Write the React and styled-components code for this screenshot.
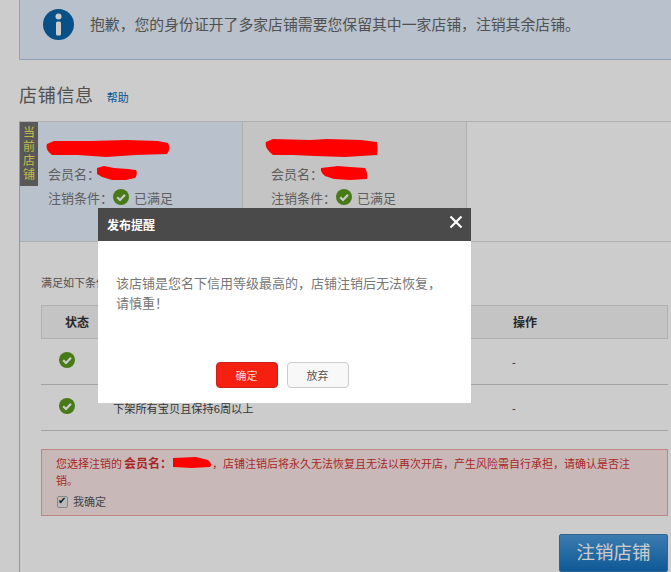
import React from 'react';
import styled, { createGlobalStyle } from 'styled-components';

const GlobalStyle = createGlobalStyle`
    html, body {
        margin: 0;
        padding: 0;
        background: #fff;
        overflow: hidden;
    }
    * {
        box-sizing: border-box;
    }
    body {
        font-family: "Liberation Sans", "Noto Sans CJK SC", sans-serif;
        color: #555;
    }
`

const Page = styled.div`
    width: 671px;
    height: 572px;
    padding-left: 19px;
    overflow: hidden;
`

const Notice = styled.div`
    height: 60px;
    width: 652px;
    background-color: #e6f2ff;
    border: 1px solid #b4cbe2;
    border-top: 0;
    border-right: 0;
    display: flex;
    align-items: flex-start;
    padding: 9px 0 0 23px;
    gap: 16px;
`

const NoticeText = styled.p`
    margin: 7px 0 0 0;
    font-size: 14.85px;
    line-height: 18px;
    color: #666;
`

const TitleRow = styled.div`
    height: 61px;
    display: flex;
    align-items: center;
    padding-top: 7px;
    gap: 13px;
`

const Title = styled.h2`
    margin: 0;
    font-size: 18px;
    font-weight: normal;
    letter-spacing: 0.7px;
    color: #666;
`

const HelpLink = styled.a`
    font-size: 11px;
    color: #0b66b3;
    margin-top: 5px;
`

const Panel = styled.div`
    border-left: 1px solid #bbb;
    border-top: 1px solid #ddd;
    height: 451px;
`

const Stores = styled.div`
    display: flex;
    height: 120px;
    border-bottom: 1px solid #ddd;
`

const StoreCard = styled.div`
    position: relative;
    width: ${p => p.$current ? '223px' : '224px'};
    background-color: ${p => p.$current ? '#e6f2ff' : '#f6f6f6'};
    border-right: 1px solid #ddd;
    padding: 13px 0 0 28px;
`

const CurrentTag = styled.div`
    position: absolute;
    left: 0;
    top: 0;
    width: 18px;
    height: 64px;
    background-color: #6e6e6e;
    color: #f5e65a;
    font-size: 12px;
    line-height: 14px;
    text-align: center;
    padding-top: 4px;
`

const StoreName = styled.div`
    height: 26px;
    display: flex;
    align-items: center;
    margin-left: ${p => p.$offset}px;
`

const InfoRow = styled.div`
    display: flex;
    align-items: center;
    height: 24px;
    font-size: 13px;
    color: #777;
`

const Satisfied = styled.span`
    margin-left: 5px;
`

const Conditions = styled.div`
    padding: 33px 0 0 21px;
`

const ConditionsLabel = styled.div`
    font-size: 11px;
    line-height: 16px;
    color: #666;
    height: 30px;
`

const Table = styled.div`
    width: 627px;
`

const TableHead = styled.div`
    display: grid;
    grid-template-columns: 471px 1fr;
    height: 34px;
    align-items: center;
    background-color: #f5f5f5;
    border: 1px solid #ddd;
    font-size: 12px;
    font-weight: bold;
    color: #333;
    padding-bottom: 2px;
`

const TableRow = styled.div`
    display: grid;
    grid-template-columns: 72px 399px 1fr;
    height: 46px;
    align-items: center;
    border-bottom: 1px solid #ccc;
    font-size: 11.2px;
    color: #444;
`

const StatusCell = styled.div`
    display: flex;
    justify-content: center;
    padding: 0 20px 3px 0;
`

const HeadLabel = styled.span`
    padding-left: 23px;
`

const HeadAction = styled.span`
    padding-left: 0;
`

const Alert = styled.div`
    width: 627px;
    height: 67px;
    margin-top: 18px;
    background-color: #fbe7e7;
    border: 1px solid #f2a6a6;
    padding: 6px 28px 0 14px;
    font-size: 11px;
    line-height: 17px;
    color: #d43030;
`

const AlertStrong = styled.b`
    font-weight: bold;
    font-size: 12px;
    margin: 0 0 0 2px;
`

const ConfirmRow = styled.label`
    display: flex;
    align-items: center;
    gap: 5px;
    height: 20px;
    margin-top: 2px;
    font-size: 11px;
    color: #555;
`

const Check = styled.input`
    appearance: none;
    position: relative;
    margin: 0 0 0 1px;
    width: 11px;
    height: 12px;
    border: 1px solid #aaa;
    border-radius: 2px;
    background-color: #e8e8e8;

    &:checked::after {
        content: "✔";
        position: absolute;
        left: 0;
        top: -2px;
        font-size: 10px;
        line-height: 12px;
        color: #222;
    }
`

const Footer = styled.div`
    width: 627px;
    display: flex;
    justify-content: flex-end;
    margin-top: 18px;
`

const CloseStoreButton = styled.button`
    width: 109px;
    height: 38px;
    border: 1px solid #3a7db5;
    border-radius: 2px;
    background: linear-gradient(#4b9bdc, #1270bd);
    color: #fff;
    font-family: inherit;
    font-size: 18.5px;
    padding: 0 0 5px;
`

const Overlay = styled.div`
    position: fixed;
    inset: 0;
    z-index: 1;
    background-color: rgba(0, 0, 0, 0.2);
`

const Modal = styled.div`
    position: absolute;
    left: 98px;
    top: 208px;
    width: 373px;
    height: 195px;
    background-color: #fff;
    display: flex;
    flex-direction: column;
`

const ModalHeader = styled.div`
    height: 33px;
    background-color: #4a4a4a;
    display: flex;
    align-items: center;
    justify-content: space-between;
    padding: 0 8px 0 9px;
    color: #fff;
    font-size: 12px;
    font-weight: bold;
`

const CloseIcon = styled.svg`
    width: 14px;
    height: 14px;
    margin-top: -5px;
`

const ModalBody = styled.p`
    margin: 0;
    padding: 33px 18px 0 18px;
    font-size: 13px;
    line-height: 20px;
    color: #777;
    height: 121px;
`

const ModalActions = styled.div`
    display: flex;
    justify-content: center;
    gap: 9px;
    padding-right: 5px;
`

const ModalButton = styled.button`
    width: 62px;
    height: 26px;
    border-radius: 4px;
    font-family: inherit;
    font-size: 11px;
    padding: 0;
    border: 1px solid ${p => p.$primary ? '#c9201a' : '#ccc'};
    background-color: ${p => p.$primary ? '#f5200f' : '#f8f8f8'};
    color: ${p => p.$primary ? '#ffd9d0' : '#555'};
`

// the red marker strokes sit on top of the dimming layer
const ScribbleSvg = styled.svg`
    position: relative;
    z-index: 2;
    flex: none;
    vertical-align: ${p => p.$align || 'baseline'};
    margin-left: ${p => p.$offset || 0}px;
`

const InfoIcon = () => (
    <svg width="31" height="31" viewBox="0 0 31 31" style={{ flex: 'none' }}>
        <circle cx="15.5" cy="15.5" r="15.5" fill="#0b66a8" />
        <circle cx="15.5" cy="7.5" r="3" fill="#fff" />
        <rect x="13" y="12.5" width="5" height="14" rx="1.5" fill="#fff" />
    </svg>
)

const CheckIcon = ({ size = 16 }) => (
    <svg width={size} height={size} viewBox="0 0 16 16" style={{ flex: 'none' }}>
        <circle cx="8" cy="8" r="8" fill="#5a9a1e" />
        <path d="M4.2 8.3 L7 11 L12 5.8" fill="none" stroke="#fff" strokeWidth="2.2" />
    </svg>
)

const Scribble = ({ width, height, d, offset, align }) => (
    <ScribbleSvg width={width} height={height} viewBox={`0 0 ${width} ${height}`} $offset={offset} $align={align}>
        <path d={d} fill="#ff0000" />
    </ScribbleSvg>
)

const App = () => {
    return (
        <>
            <GlobalStyle />
            <Page>
                <Notice>
                    <InfoIcon />
                    <NoticeText>抱歉，您的身份证开了多家店铺需要您保留其中一家店铺，注销其余店铺。</NoticeText>
                </Notice>
                <TitleRow>
                    <Title>店铺信息</Title>
                    <HelpLink>帮助</HelpLink>
                </TitleRow>
                <Panel>
                    <Stores>
                        <StoreCard $current>
                            <CurrentTag>当<br />前<br />店<br />铺</CurrentTag>
                            <StoreName $offset={-2}>
                                <Scribble width={124} height={17} d="M1 4 L8 1 L45 1 L80 0 L112 1 L122 3 Q125 9 121 14 L90 15 L60 17 L32 15 L6 15 Q-1 10 1 4 Z" />
                            </StoreName>
                            <InfoRow>
                                会员名：
                                <Scribble width={41} height={14} offset={-4} d="M1 2 L8 0 L18 2 L32 3 L40 4 Q42 8 39 12 L30 14 L16 14 L6 11 L1 8 Z" />
                            </InfoRow>
                            <InfoRow>
                                注销条件：<CheckIcon /><Satisfied>已满足</Satisfied>
                            </InfoRow>
                        </StoreCard>
                        <StoreCard>
                            <StoreName $offset={-6}>
                                <Scribble width={113} height={18} d="M1 3 L8 0 L45 1 L62 0 L96 1 L112 3 Q113 10 112 16 L80 18 L50 17 L28 16 L8 16 Q-1 9 1 3 Z" />
                            </StoreName>
                            <InfoRow>
                                会员名：
                                <Scribble width={48} height={14} offset={-3} d="M1 2 L18 0 L30 1 L45 2 Q48 7 47 13 L30 14 L14 13 L5 10 Q0 6 1 2 Z" />
                            </InfoRow>
                            <InfoRow>
                                注销条件：<CheckIcon /><Satisfied>已满足</Satisfied>
                            </InfoRow>
                        </StoreCard>
                    </Stores>
                    <Conditions>
                        <ConditionsLabel>满足如下条件</ConditionsLabel>
                        <Table>
                            <TableHead>
                                <HeadLabel>状态</HeadLabel>
                                <HeadAction>操作</HeadAction>
                            </TableHead>
                            <TableRow>
                                <StatusCell><CheckIcon /></StatusCell>
                                <span></span>
                                <span>-</span>
                            </TableRow>
                            <TableRow>
                                <StatusCell><CheckIcon /></StatusCell>
                                <span>下架所有宝贝且保持6周以上</span>
                                <span>-</span>
                            </TableRow>
                        </Table>
                        <Alert>
                            您选择注销的<AlertStrong>会员名：</AlertStrong>
                            <Scribble width={40} height={12} align="-1px" d="M1 1 L24 0 L36 3 Q41 7 38 10 L20 11 L1 10 Z" />
                            ，店铺注销后将永久无法恢复且无法以再次开店，产生风险需自行承担，请确认是否注销。
                            <ConfirmRow>
                                <Check type="checkbox" defaultChecked readOnly />
                                我确定
                            </ConfirmRow>
                        </Alert>
                        <Footer>
                            <CloseStoreButton>注销店铺</CloseStoreButton>
                        </Footer>
                    </Conditions>
                </Panel>
            </Page>
            <Overlay>
                <Modal>
                    <ModalHeader>
                        发布提醒
                        <CloseIcon viewBox="0 0 14 14">
                            <path d="M1.5 1.5 L12.5 12.5 M12.5 1.5 L1.5 12.5" stroke="#fff" strokeWidth="2.2" />
                        </CloseIcon>
                    </ModalHeader>
                    <ModalBody>该店铺是您名下信用等级最高的，店铺注销后无法恢复，请慎重！</ModalBody>
                    <ModalActions>
                        <ModalButton $primary>确定</ModalButton>
                        <ModalButton>放弃</ModalButton>
                    </ModalActions>
                </Modal>
            </Overlay>
        </>
    )
}

export default App;
